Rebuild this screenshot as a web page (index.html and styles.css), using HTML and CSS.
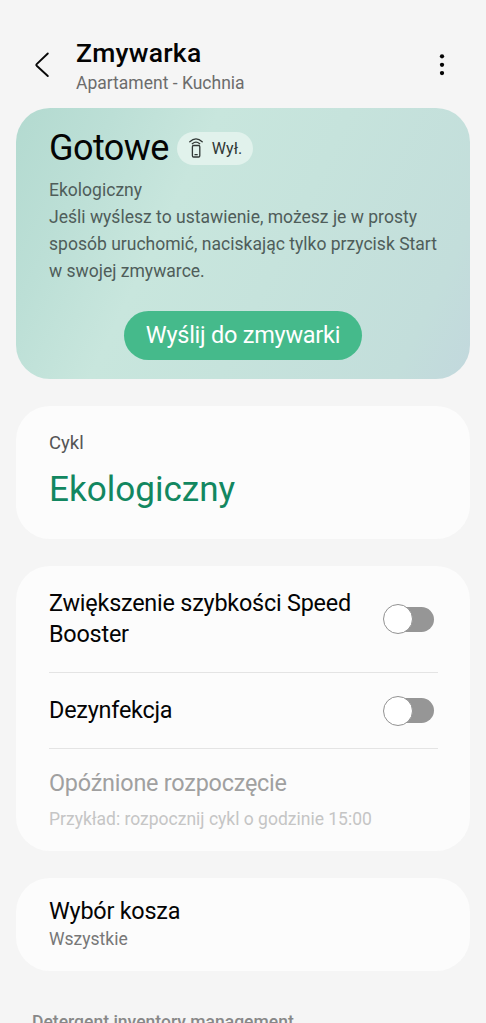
FILE: index.html
```html
<!DOCTYPE html>
<html lang="pl">
<head>
<meta charset="utf-8">
<title>Zmywarka</title>
<link rel="stylesheet" href="styles.css">
</head>
<body>
<main class="screen">
  <header class="header">
    <svg class="back" width="16" height="26" viewBox="0 0 16 26"><path d="M13.800 1.500 2.700 12.100Q1.900 12.900 2.700 13.700L13.800 24"/></svg>
    <div class="heading">
      <h1 class="title">Zmywarka</h1>
      <p class="location">Apartament - Kuchnia</p>
    </div>
    <svg class="more" width="6" height="24" viewBox="0 0 6 24"><circle cx="3" cy="3.300" r="2.150"/><circle cx="3" cy="11.800" r="2.150"/><circle cx="3" cy="20.100" r="2.150"/></svg>
  </header>

  <section class="status">
    <div class="status-row">
      <h2 class="state">Gotowe</h2>
      <span class="chip">
        <svg class="remote" width="14" height="20" viewBox="0 0 14 20"><path d="M.8 3.700Q7-1.900 13.200 3.700M3.300 5.700Q7 2.700 10.700 5.700"/><rect x="3.400" y="7.500" width="7.400" height="11.500" rx="1.200"/><path d="M6 16.700h2.200"/></svg>
        <span class="chip-text">Wył.</span>
      </span>
    </div>
    <p class="description">Ekologiczny<br>Jeśli wyślesz to ustawienie, możesz je w prosty<br>sposób uruchomić, naciskając tylko przycisk Start<br>w swojej zmywarce.</p>
    <button class="send">Wyślij do zmywarki</button>
  </section>

  <section class="card cycle">
    <p class="cycle-label">Cykl</p>
    <p class="cycle-value">Ekologiczny</p>
  </section>

  <section class="card options">
    <div class="option option-first"><span class="option-text">Zwiększenie szybkości Speed<br>Booster</span><span class="toggle"><span class="knob"></span></span></div>
    <div class="option option-second"><span class="option-text">Dezynfekcja</span><span class="toggle"><span class="knob"></span></span></div>
    <div class="delay"><p class="delay-title">Opóźnione rozpoczęcie</p><p class="delay-note">Przykład: rozpocznij cykl o godzinie 15:00</p></div>
  </section>

  <section class="card basket">
    <p class="basket-title">Wybór kosza</p>
    <p class="basket-value">Wszystkie</p>
  </section>

  <h3 class="section-title">Detergent inventory management</h3>
</main>
</body>
</html>
```
FILE: styles.css
```css
* { box-sizing: border-box; }
body, h1, h2, h3, p { margin: 0; font-weight: 400; }
body { background: #f5f5f5; font-family: Roboto, sans-serif; color: #040404; overflow: hidden; }
.screen { width: 486px; height: 1023px; overflow: hidden; padding: 0 16px; }
.header { height: 108px; padding: 37px 25px 0 18px; display: flex; align-items: flex-start; }
.back { margin-top: 15px; fill: none; stroke: #080808; stroke-width: 1.9; stroke-linecap: round; }
.heading { margin-left: 26px; flex: 1; white-space: nowrap; }
.title { font-size: 26.5px; letter-spacing: .25px; line-height: 32px; font-weight: 500; }
.location { margin-top: 1px; font-size: 17.5px; line-height: 26px; color: #6c6c6c; }
.more { margin-top: 16px; fill: #040404; }
.status { height: 271px; border-radius: 34px; padding: 20px 32px 0 33px; background: linear-gradient(116deg, #b3dad0 0%, #bcdfd6 17%, #c8e6dd 35%, #c6e3dc 57%, #c3dedb 87%, #c2d8dd 100%); }
.status-row { display: flex; align-items: center; height: 40px; }
.state { font-size: 36px; letter-spacing: -.55px; line-height: 40px; }
.chip { width: 76px; height: 33px; margin-left: 8px; border-radius: 17px; background: #e1f2ec; display: flex; align-items: center; padding-left: 12px; }
.remote { fill: none; stroke: #303735; stroke-width: 1.3; stroke-linecap: round; }
.chip-text { margin-left: 9px; font-size: 16px; color: #303735; }
.description { margin-top: 9px; font-size: 17.55px; line-height: 27px; color: #4f5d5a; white-space: nowrap; }
.send { display: block; width: 238px; height: 49px; margin: 26.4px 0 0 75px; border: 0; border-radius: 25px; background: #45ba8b; color: #fff; font: 400 23.5px Roboto, sans-serif; letter-spacing: -.25px; padding: 0 0 1px; white-space: nowrap; }
.card { margin-top: 27px; border-radius: 34px; background: #fcfcfc; padding-left: 33px; padding-right: 32px; }
.cycle { height: 133px; padding-top: 26px; }
.cycle-label { font-size: 18.5px; line-height: 23px; color: #555; }
.cycle-value { margin-top: 13px; font-size: 35.1px; line-height: 42px; color: #128760; }
.options { height: 285px; white-space: nowrap; }
.option { display: flex; align-items: center; justify-content: space-between; border-bottom: 1px solid #e4e4e4; padding-right: 4px; }
.option-first { height: 107px; }
.option-second { height: 76px; }
.option-text { font-size: 23.4px; letter-spacing: -.22px; line-height: 31px; }
.toggle { width: 51px; height: 30px; padding-left: 8px; display: flex; align-items: center; }
.toggle::before { content: ""; flex: none; width: 42.500px; height: 25px; border-radius: 13px; background: #969696; }
.knob { flex: none; width: 30px; height: 30px; margin-left: -50.5px; border: 1.3px solid #929292; border-radius: 50%; background: #fff; }
.delay { padding-top: 19px; }
.delay-title { font-size: 23.4px; letter-spacing: -.22px; line-height: 31px; color: #a0a0a0; }
.delay-note { margin-top: 8px; font-size: 17.5px; line-height: 25px; color: #c5c5c5; }
.basket { height: 93px; padding-top: 18px; }
.basket-title { font-size: 23.4px; letter-spacing: -.22px; line-height: 31px; }
.basket-value { font-size: 17.5px; line-height: 25px; color: #777; }
.section-title { margin: 39px 0 0 16px; font-size: 17.55px; line-height: 25px; font-weight: 500; color: #888; }
```
